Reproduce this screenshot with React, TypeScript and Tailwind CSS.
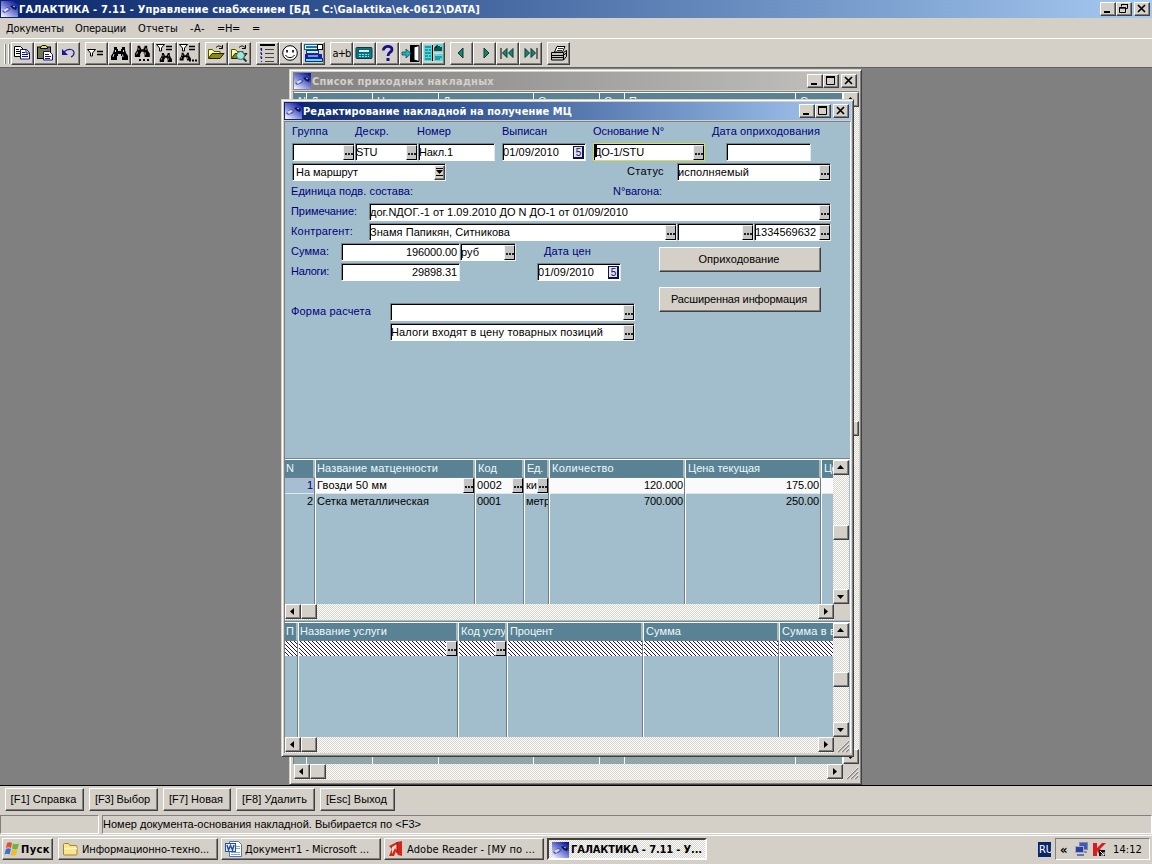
import { useLayoutEffect, useRef } from "react";
import type { ReactNode } from "react";
import clsx from "clsx";

const ui = "font-['DejaVu_Sans_Condensed','DejaVu_Sans',sans-serif]";
const raised =
  "border border-t-white border-l-white border-r-[#404040] border-b-[#404040] bg-[#d4d0c8] shadow-[inset_-1px_-1px_0_#808080]";
const track =
  "bg-[repeating-conic-gradient(#ffffff_0_25%,#d8d4cc_0_50%)] bg-[length:2px_2px]";

// Spreads the letters so that a label takes the given width
const Fit = ({
  w,
  children,
  className,
}: {
  w: number;
  children: string;
  className?: string;
}) => {
  const ref = useRef<HTMLSpanElement>(null);
  useLayoutEffect(() => {
    const el = ref.current;
    if (!el) return;
    el.style.letterSpacing = "0px";
    const natural = el.getBoundingClientRect().width;
    el.style.letterSpacing = `${(w - natural) / children.length}px`;
  }, [w, children]);
  return (
    <span ref={ref} className={clsx("inline-block shrink-0 whitespace-pre", className)}>
      {children}
    </span>
  );
};

const AppIcon = () => (
  <svg width="17" height="16" viewBox="0 0 17 16" className="shrink-0">
    <defs>
      <linearGradient id="sky" x1="0" y1="1" x2="0.8" y2="0">
        <stop offset="0" stopColor="#ffffff" />
        <stop offset="0.45" stopColor="#8a92e0" />
        <stop offset="1" stopColor="#0a1a9c" />
      </linearGradient>
    </defs>
    <rect width="17" height="16" fill="url(#sky)" />
    <path d="M1 10l5-4 4 1-2 3-5 2z" fill="#5058a4" />
    <path d="M2 9l4-2 2 1-4 3z" fill="#d8dcf8" />
    <path d="M9 5l3-1 4 2-1 3-3-1z" fill="#101850" />
    <path d="M12 5l2 1" stroke="#b8c0f0" />
  </svg>
);

const CaptionButton = ({ kind }: { kind: "min" | "max" | "restore" | "close" }) => (
  <div className={clsx("h-[14px] w-4", raised)}>
    <svg width="14" height="12" viewBox="0 0 14 12" fill="none" stroke="#000">
      {kind === "min" && <path d="M3 9h6" strokeWidth="2" />}
      {kind === "max" && <path d="M2.5 2v7.5h8V2M2 2h9" strokeWidth="1" />}
      {kind === "max" && <path d="M2 2h9" strokeWidth="2" />}
      {kind === "restore" && (
        <path d="M4.5 3.5V1.5h6v4h-2M4 1.5h7M2.5 4.5h6v5h-6zM2 5.2h7" />
      )}
      {kind === "close" && <path d="M3 2l7 7M10 2l-7 7" strokeWidth="1.7" />}
    </svg>
  </div>
);

const Caption = ({
  title,
  w,
  className,
  restore,
}: {
  title: string;
  w: number;
  className: string;
  restore?: boolean;
}) => (
  <div className={clsx("flex h-[18px] items-center pr-0.5 pl-px text-[11px] leading-none font-bold", ui, className)}>
    <AppIcon />
    <Fit w={w} className="ml-px">
      {title}
    </Fit>
    <div className="ml-auto flex">
      <CaptionButton kind="min" />
      <CaptionButton kind={restore ? "restore" : "max"} />
      <div className="ml-0.5">
        <CaptionButton kind="close" />
      </div>
    </div>
  </div>
);

const Binoculars = () => (
  <>
    <path d="M4 3h3v2h1v2h3V5h1V3h3v3l1 3 2 3v4h-6v-4h-1v-2H8v2H7v4H1v-4l2-3 1-3z" fill="#000" />
    <path d="M5.500 6v2M13.500 6v2M4 10l-1 3M12.500 10.500l.5 2.500" stroke="#fff" strokeWidth=".8" />
  </>
);

const Funnel = () => (
  <>
    <path d="M.5.5h8l-3 3.5v3h-2V4z" fill="#fff" stroke="#000" />
    <path d="M10 2.5h6M10 5.5h6" stroke="#000" strokeWidth="1.6" />
  </>
);

const Folder = () => (
  <>
    <path d="M1.500 14V5.500h4l1.500 2h6V9" fill="#ffff9a" stroke="#55550a" />
    <path d="M1.500 14.500L5 9.500h12l-4 5z" fill="#8a8a12" stroke="#222200" />
    <path d="M9 3.500c2-2 4-2 6 0M15.500 1v3.500H12" fill="none" stroke="#000" />
  </>
);

const icons: Record<string, ReactNode> = {
  copy: (
    <>
      <path d="M1.5 2.500h6l3 3v7h-9z" fill="#fff" stroke="#000" />
      <path d="M3 5.500h3M3 7.500h5M3 9.500h4" stroke="#000" />
      <path d="M7.500 5.500h6l3 3v6.500h-9z" fill="#fff" stroke="#101080" />
      <path d="M13 5.500v3.500h3M9 8.500h3M9 10.500h6M9 12.500h6" fill="none" stroke="#101080" />
    </>
  ),
  paste: (
    <>
      <rect x="1.500" y="3" width="13" height="11.500" fill="#77774a" stroke="#000" />
      <path d="M4.500 4.500V3l2-1.500h3l2 1.500v1.500z" fill="#e4e060" stroke="#000" />
      <path d="M7.500 7.500h6l3 3V16h-9z" fill="#fff" stroke="#101080" />
      <path d="M9 10.500h4M9 12.500h6M9 14.500h5" stroke="#101080" />
    </>
  ),
  undo: (
    <>
      <path d="M5 8c4-4 10-3 10 1 0 2-1 3-3 4" fill="none" stroke="#1515a0" strokeWidth="1.200" />
      <path d="M3 5v6h6z" fill="#1515a0" />
    </>
  ),
  filter: (
    <g transform="translate(0 5)">
      <Funnel />
    </g>
  ),
  find: <Binoculars />,
  findNext: (
    <>
      <g transform="translate(1 -1) scale(.88)">
        <Binoculars />
      </g>
      <path d="M6 16h2M10 16h2M14 16h2" stroke="#000" strokeWidth="2" />
    </>
  ),
  filterFind: (
    <>
      <Funnel />
      <g transform="translate(3 7) scale(.72 .68)">
        <Binoculars />
      </g>
    </>
  ),
  filterNext: (
    <>
      <Funnel />
      <g transform="translate(0 7) scale(.66 .6)">
        <Binoculars />
      </g>
      <path d="M10 16.500h2M13 16.500h2M16 16.500h2" stroke="#000" strokeWidth="2" />
    </>
  ),
  open: <Folder />,
  preview: (
    <>
      <Folder />
      <circle cx="10.500" cy="11.500" r="4" fill="#a4e4dc" stroke="#207070" />
      <path d="M13.500 14.500l3 3" stroke="#104040" strokeWidth="2" />
    </>
  ),
  list: (
    <>
      <path d="M2 1h15" stroke="#000" strokeWidth="2" />
      <path d="M7 5.500h9M7 9.500h9M7 13.500h9M7 17.500h9" stroke="#333" strokeWidth=".9" />
      <path d="M3.500 4v3M3.500 9v2M3.500 13v2M3.500 17v1M2 5h2M2 9h2M2 13h2" stroke="#1414a0" strokeWidth="1.200" />
    </>
  ),
  smile: (
    <>
      <circle cx="9" cy="9" r="7.300" fill="#fff" stroke="#000" />
      <path d="M6 6v2.500M12 6v2.500" stroke="#000" strokeWidth="1.600" />
      <path d="M4.500 11c2 3.500 7 3.500 9 0" fill="none" stroke="#000" />
    </>
  ),
  form: (
    <>
      <rect x=".5" y=".5" width="18" height="5" fill="#d8f6ff" stroke="#126484" />
      <path d="M2 3h11" stroke="#2070b0" strokeWidth="2" />
      <rect x="13.500" y=".5" width="5" height="5" fill="#fff" stroke="#000" />
      <rect x="2.500" y="6.500" width="12" height="3" fill="#c4f2ff" stroke="#1030a0" />
      <rect x="1" y="10" width="17" height="4" fill="#1020a8" />
      <path d="M4 12h10" stroke="#fff" />
      <rect x="1.500" y="14.500" width="17" height="3" fill="#60d8e8" stroke="#103080" />
    </>
  ),
  calc: (
    <>
      <rect x="1" y="3.500" width="16" height="11" rx="1" fill="#087888" stroke="#043848" />
      <rect x="3.500" y="5.500" width="11" height="3" fill="#d0f4e8" stroke="#043848" strokeWidth=".7" />
      <path d="M4 10.500h10M4 12.500h10" stroke="#80e0e8" strokeDasharray="2 1" />
    </>
  ),
  help: (
    <>
      <path d="M5.500 6.500C5 1.500 14 1 14 5.500 14 8.500 10 8 10 12" fill="none" stroke="#10108c" strokeWidth="2.800" />
      <rect x="8.500" y="14" width="3" height="3" fill="#10108c" />
    </>
  ),
  exit: (
    <>
      <path d="M9 1h9v17H9z" fill="#000" />
      <path d="M13 3l5-1.500v16L13 16z" fill="#fff" stroke="#000" />
      <path d="M1 8h4V5l5 4.500L5 14v-3H1z" fill="#20b0b8" stroke="#045060" strokeWidth=".8" />
    </>
  ),
  views: (
    <>
      <path d="M0 1h8v16H0zM10 0h9v8h-9zM10 10h9v7h-9z" fill="#50dce0" />
      <path d="M1 3h6M1 6h3M5 6h2M1 9h6M1 12h3M5 12h2M1 15h6M11 13h7M11 15h5" stroke="#045860" />
      <path d="M11 7V4l2-2v5M15 2v5M17 3v4" fill="none" stroke="#000" strokeWidth="1.300" />
      <path d="M8.500 1v16" stroke="#000" />
    </>
  ),
  prev: <path d="M11 4v10L6 9z" fill="#1f8070" stroke="#043c34" />,
  next: <path d="M9 4v10l5-5z" fill="#1f8070" stroke="#043c34" />,
  first: (
    <>
      <path d="M3 4v11" stroke="#000" />
      <path d="M9 4.500v9L4.500 9zM15 4.500v9L10.500 9z" fill="#1f8070" stroke="#043c34" />
    </>
  ),
  last: (
    <>
      <path d="M16 4v11" stroke="#000" />
      <path d="M4 4.500v9L8.500 9zM10 4.500v9l4.500-4.500z" fill="#1f8070" stroke="#043c34" />
    </>
  ),
  print: (
    <>
      <path d="M5.500 8L8 2.500h8L13.500 8z" fill="#fff" stroke="#000" />
      <path d="M9 4.500h5M8 6.500h5" stroke="#000" strokeWidth=".8" />
      <path d="M2.500 8.500h12l3-2v6l-3 3.500h-12z" fill="#c8c4bc" stroke="#000" />
      <path d="M3 11.500h11.500M3 13.500h11.500M14.500 9v7M14.500 11l3-2" stroke="#000" />
    </>
  ),
};

const toolGroups = [
  ["copy", "paste", "undo"],
  ["filter", "find", "findNext", "filterFind", "filterNext"],
  ["open", "preview"],
  ["list", "smile", "form"],
  ["text", "calc", "help", "exit", "views"],
  ["prev", "next", "first", "last"],
  ["print"],
];

const Toolbar = () => (
  <div className="flex h-[29px] items-start gap-[5px] border-t border-white pt-[3px] pl-1">
    <div className="-mr-1 flex gap-0.5 pt-0.5">
      <div className="h-5 w-0.5 border-r border-l border-r-[#808080] border-l-white" />
      <div className="h-5 w-0.5 border-r border-l border-r-[#808080] border-l-white" />
    </div>
    {toolGroups.map((group) => (
      <div key={group[0]} className="flex">
        {group.map((name) => (
          <div key={name} className={clsx("flex h-[23px] w-[23px] items-center justify-center", raised)}>
            {name === "text" ? (
              <Fit w={18} className={clsx("text-[11px] leading-none", ui)}>
                a+b
              </Fit>
            ) : (
              <svg width="19" height="19" viewBox="0 0 19 19" className="shrink-0">
                {icons[name]}
              </svg>
            )}
          </div>
        ))}
      </div>
    ))}
  </div>
);

const Dots = () => (
  <div className="flex h-[15px] w-[11px] shrink-0 items-end justify-center gap-px border border-t-[#f4f4f4] border-l-[#f4f4f4] border-r-black border-b-black bg-[#c4c4c4] pb-1">
    <i className="h-0.5 w-0.5 bg-[#202020]" />
    <i className="h-0.5 w-0.5 bg-[#202020]" />
    <i className="h-0.5 w-0.5 bg-[#202020]" />
  </div>
);

const Calendar = () => (
  <div className="mr-px flex h-[13px] w-[11px] shrink-0 items-center justify-center border border-[#10104c] bg-[#dfe3f0] text-[10px] leading-none text-[#10104c] shadow-[inset_-1px_-1px_0_#10104c]">
    5
  </div>
);

const Field = ({
  className,
  text,
  w = 0,
  end,
  right,
  focused,
}: {
  className: string;
  text?: string;
  w?: number;
  end?: ReactNode;
  right?: boolean;
  focused?: boolean;
}) => (
  <div
    className={clsx(
      "h-[18px] shrink-0 border",
      focused ? "border-[#d4e04c]" : "border-t-[#76868e] border-l-[#76868e] border-r-[#dfe9ee] border-b-white",
      className,
    )}
  >
    <div className={clsx("flex h-4 items-center border-t border-l border-black bg-white text-black", right && "justify-end pr-0.5")}>
      {focused && <span className="-mr-0.5 h-3 w-0.5 self-start bg-black" />}
      {text && (
        <Fit w={w} className={right ? "" : "-ml-px"}>
          {text}
        </Fit>
      )}
      {end && <div className="ml-auto flex items-center">{end}</div>}
    </div>
  </div>
);

const arrows = {
  left: "M8 3v7L4 6.500z",
  right: "M5 3v7l4-3.500z",
  up: "M3 8h7L6.500 4z",
  down: "M3 5h7L6.500 9z",
};

const ScrollButton = ({ dir }: { dir?: keyof typeof arrows }) => (
  <div className={clsx("h-[15px] w-4 shrink-0", raised)}>
    {dir && (
      <svg width="13" height="13" viewBox="0 0 13 13">
        <path d={arrows[dir]} fill="#000" />
      </svg>
    )}
  </div>
);

const HScroll = () => (
  <div className={clsx("flex h-4 flex-1 items-start", track)}>
    <ScrollButton dir="left" />
    <ScrollButton />
    <div className="ml-auto">
      <ScrollButton dir="right" />
    </div>
  </div>
);

const VScroll = ({ thumb }: { thumb: string }) => (
  <div className={clsx("flex w-4 shrink-0 flex-col", track)}>
    <ScrollButton dir="up" />
    <div className={thumb}>
      <ScrollButton />
    </div>
    <div className="mt-auto">
      <ScrollButton dir="down" />
    </div>
  </div>
);

const Grip = () => (
  <svg width="16" height="16" viewBox="0 0 16 16" className="shrink-0 bg-[#d4d0c8]">
    <path d="M4 15L15 4M8 15l7-7M12 15l3-3" stroke="#808080" strokeWidth="1.400" />
    <path d="M3 15L15 3M7 15l8-8M11 15l4-4" stroke="#fff" strokeWidth=".7" />
  </svg>
);

type Column = {
  title: string;
  tw: number;
  width: string;
  cells?: [string, number][];
  right?: boolean;
  dots?: boolean;
};

const goods: Column[] = [
  { title: "N", tw: 8, width: "w-[31px]", cells: [["1", 6], ["2", 6]], right: true },
  {
    title: "Название матценности",
    tw: 121,
    width: "w-[160px]",
    cells: [["Гвозди 50 мм", 70], ["Сетка металлическая", 112]],
    dots: true,
  },
  { title: "Код", tw: 19, width: "w-[49px]", cells: [["0002", 25], ["0001", 24]], dots: true },
  { title: "Ед.", tw: 16, width: "w-[25px]", cells: [["ки", 11], ["метр", 24]], dots: true },
  { title: "Количество", tw: 62, width: "w-[136px]", cells: [["120.000", 39], ["700.000", 39]], right: true },
  { title: "Цена текущая", tw: 72, width: "w-[136px]", cells: [["175.00", 33], ["250.00", 33]], right: true },
  { title: "Це", tw: 13, width: "w-[11px]", cells: [["", 0], ["", 0]] },
];

const services: Column[] = [
  { title: "П", tw: 8, width: "w-[14px]" },
  { title: "Название услуги", tw: 87, width: "w-[160px]", dots: true },
  { title: "Код услу", tw: 45, width: "w-[49px]", dots: true },
  { title: "Процент", tw: 43, width: "w-[136px]" },
  { title: "Сумма", tw: 35, width: "w-[136px]" },
  { title: "Сумма в в", tw: 54, width: "w-[53px]" },
];

const Grid = ({ columns, body, thumb, grip }: { columns: Column[]; body: string; thumb: string; grip?: boolean }) => (
  <div className="border-t border-t-[#76868e]">
    <div className="flex border-t border-white">
      <div className={clsx("flex w-[548px] shrink-0 overflow-hidden", body)}>
        {columns.map((col, i) => {
          const last = i === columns.length - 1;
          return (
            <div
              key={col.title}
              className={clsx(
                "flex shrink-0 flex-col overflow-hidden",
                col.width,
                !last && "border-r border-white",
              )}
            >
              <div
                className={clsx(
                  "flex h-[18px] items-center overflow-hidden border-b border-b-[#6f8088] bg-[#598394] text-[#f0f8fc]",
                  i < 2 ? "pl-px" : "pl-0.5",
                  !last && "border-r-2 border-r-[#aab8c0]",
                )}
              >
                <Fit w={col.tw}>{col.title}</Fit>
              </div>
              <div className={clsx("flex flex-1 flex-col", !last && "border-r border-[#6f7e86]")}>
                {col.cells ? (
                  <>
                    <div
                      className={clsx(
                        "flex h-4 items-center overflow-hidden border-b border-[#dfe8ec] pl-px",
                        i === 0 ? "bg-[#a7bed2] text-[#000080]" : "bg-[#fafafa]",
                        col.right && "justify-end pr-px",
                      )}
                    >
                      <Fit w={col.cells[0][1]}>{col.cells[0][0]}</Fit>
                      {col.dots && (
                        <div className="ml-auto">
                          <Dots />
                        </div>
                      )}
                    </div>
                    <div className={clsx("flex h-[15px] items-center overflow-hidden pl-px", col.right && "justify-end pr-px")}>
                      <Fit w={col.cells[1][1]}>{col.cells[1][0]}</Fit>
                    </div>
                  </>
                ) : (
                  <div className="flex h-[15px] justify-end bg-[repeating-linear-gradient(45deg,#1c0f78_0_0.700px,#ffffff_0.700px_2.828px)]">
                    {col.dots && <Dots />}
                  </div>
                )}
              </div>
            </div>
          );
        })}
      </div>
      <VScroll thumb={thumb} />
    </div>
    <div className="flex">
      <HScroll />
      {grip ? <Grip /> : <div className="h-4 w-4 bg-[#d4d0c8]" />}
    </div>
  </div>
);

const InvoiceForm = () => (
  <div className="flex h-[336px] flex-col bg-[#a2bdcb] pl-1.5 text-[#000080]">
    <div className="flex h-5 items-center pb-0.5">
      <Fit w={36} className="ml-px">Группа</Fit>
      <Fit w={34} className="ml-[27px]">Дескр.</Fit>
      <Fit w={34} className="ml-[28px]">Номер</Fit>
      <Fit w={45} className="ml-[51px]">Выписан</Fit>
      <Fit w={71} className="ml-[46px]">Основание N°</Fit>
      <Fit w={108} className="ml-12">Дата оприходования</Fit>
    </div>
    <div className="flex h-5 items-center pl-px">
      <Field className="w-[63px]" end={<Dots />} />
      <Field className="w-[63px]" text="STU" w={21} end={<Dots />} />
      <Field className="w-[77px]" text="Накл.1" w={34} />
      <Field className="ml-[7px] w-[84px]" text="01/09/2010" w={56} end={<Calendar />} />
      <Field className="ml-[7px] w-[112px]" text="ДО-1/STU" w={50} end={<Dots />} focused />
      <Field className="ml-[21px] w-[85px]" />
    </div>
    <div className="flex h-5 items-center pl-px">
      <Field
        className="w-[154px]"
        text=" На маршрут"
        w={65}
        end={
          <div className={clsx("h-[15px] w-[11px]", raised)}>
            <svg width="9" height="12" viewBox="0 0 9 12">
              <path d="M1 2.500h7M1 9.500h7" stroke="#000" />
              <path d="M1 4h7L4.500 8z" fill="#000" />
            </svg>
          </div>
        }
      />
      <Fit w={37} className="ml-[181px] pb-0.5 text-black">Статус</Fit>
      <Field className="ml-[13px] w-[154px]" text="исполняемый" w={71} end={<Dots />} />
    </div>
    <div className="flex h-5 items-center pb-0.5">
      <Fit w={122}>Единица подв. состава:</Fit>
      <Fit w={49} className="ml-[200px]">N°вагона:</Fit>
    </div>
    <div className="flex h-5 items-center">
      <div className="w-[78px] pb-0.5">
        <Fit w={66}>Примечание:</Fit>
      </div>
      <Field className="w-[462px]" text="дог.NДОГ.-1 от 1.09.2010 ДО N ДО-1 от 01/09/2010" w={258} end={<Dots />} />
    </div>
    <div className="flex h-5 items-center">
      <div className="w-[78px] pb-0.5">
        <Fit w={62}>Контрагент:</Fit>
      </div>
      <Field className="w-[308px]" text="Знамя Папикян, Ситникова" w={140} end={<Dots />} />
      <Field className="w-[77px]" end={<Dots />} />
      <Field className="w-[77px]" text="1334569632" w={61} end={<Dots />} />
    </div>
    <div className="flex">
      <div className="flex w-[368px] flex-col">
        <div className="flex h-5 items-center">
          <div className="w-[50px] pb-0.5">
            <Fit w={38}>Сумма:</Fit>
          </div>
          <Field className="w-[119px]" text="196000.00" w={51} right />
          <Field className="w-[56px]" text="руб" w={18} end={<Dots />} />
          <Fit w={47} className="ml-[28px] pb-0.5">Дата цен</Fit>
        </div>
        <div className="flex h-5 items-center">
          <div className="w-[50px] pb-0.5">
            <Fit w={38}>Налоги:</Fit>
          </div>
          <Field className="w-[119px]" text="29898.31" w={45} right />
          <Field className="ml-[77px] w-[84px]" text="01/09/2010" w={56} end={<Calendar />} />
        </div>
        <div className="mt-5 flex h-5 items-center">
          <div className="w-[99px] pb-0.5">
            <Fit w={80}>Форма расчета</Fit>
          </div>
          <Field className="w-[245px]" end={<Dots />} />
        </div>
        <div className="flex h-5 items-center pl-[99px]">
          <Field className="w-[245px]" text="Налоги входят в цену товарных позиций" w={212} end={<Dots />} />
        </div>
      </div>
      <div className="flex flex-col gap-[15px] pt-[5px] text-black">
        <div className={clsx("flex h-[25px] w-[162px] items-center justify-center pr-0.5", raised)}>
          <Fit w={81}>Оприходование</Fit>
        </div>
        <div className={clsx("flex h-[25px] w-[162px] items-center justify-center pr-0.5", raised)}>
          <Fit w={136}>Расширенная информация</Fit>
        </div>
      </div>
    </div>
  </div>
);

const windowFrame =
  "absolute border border-t-[#d4d0c8] border-l-[#d4d0c8] border-r-[#404040] border-b-[#404040] bg-[#d4d0c8] p-0.5 shadow-[inset_1px_1px_0_#fff,inset_-1px_-1px_0_#808080]";

const listColumns = ["w-[13px]", "w-[66px]", "w-[66px]", "w-[95px]", "w-[66px]", "w-[25px]", "w-[171px]", "w-[47px]"];
const listTitles = ["N", "Дескр.", "Номер", "Дата", "Основание", "С", "Поставщик", "Сумма"];

const ListWindow = () => (
  <div className={clsx(windowFrame, "top-[1px] left-[289px] h-[716px] w-[573px]")}>
    <Caption
      title="Список приходных накладных"
      w={182}
      className="ml-px bg-linear-to-r from-[#808080] to-[#c4c2be] text-[#d4d0c8]"
    />
    <div className="mt-px ml-px flex h-[673px] border-t border-l border-[#808080]">
      <div className="flex w-[549px]">
        {listColumns.map((width, i) => (
          <div key={i} className={clsx("shrink-0 border-r border-white bg-[#91a6a6]", width)}>
            <div className="h-[19px] overflow-hidden border-t border-white bg-[#598394] pt-[3px] pl-1 text-[#f0f8fc]">
              {listTitles[i]}
            </div>
          </div>
        ))}
      </div>
      <VScroll thumb="mt-[314px]" />
    </div>
    <div className="ml-0.5 flex">
      <HScroll />
      <Grip />
    </div>
  </div>
);

const InvoiceWindow = () => (
  <div className={clsx(windowFrame, "top-[31px] left-[281px] h-[658px] w-[573px]")}>
    <Caption
      title="Редактирование накладной на получение МЦ"
      w={269}
      className="bg-linear-to-r from-[#0a246a] to-[#a6caf0] text-white"
    />
    <div className="mt-px border-t border-r border-l border-t-[#808080] border-r-white border-l-[#808080] bg-[#a2bdcb]">
      <InvoiceForm />
      <div className="pb-px">
        <Grid columns={goods} body="h-[144px]" thumb="mt-[50px]" />
      </div>
      <Grid columns={services} body="h-[114px]" thumb="mt-[34px]" grip />
    </div>
  </div>
);

const menu: [string, number, string][] = [
  ["Документы", 58, ""],
  ["Операции", 51, "ml-[11px]"],
  ["Отчеты", 40, "ml-[12px]"],
  ["-А-", 15, "ml-[12px]"],
  ["=Н=", 23, "ml-[12px]"],
  ["=", 7, "ml-[12px]"],
];

const keys: [string, number, string][] = [
  ["[F1] Справка", 66, "w-[79px]"],
  ["[F3] Выбор", 55, "w-[69px]"],
  ["[F7] Новая", 54, "w-[68px]"],
  ["[F8] Удалить", 65, "w-[79px]"],
  ["[Esc] Выход", 61, "w-[75px]"],
];

const Task = ({ icon, text, w }: { icon: ReactNode; text: string; w: number }) => (
  <div className={clsx("flex h-[22px] w-40 items-center gap-[3px] pl-[3px]", raised)}>
    {icon}
    <Fit w={w}>{text}</Fit>
  </div>
);

const Taskbar = () => (
  <div className={clsx("flex h-[29px] items-start gap-[3px] border-t border-white pt-0.5 pl-0.5 text-[11px] leading-none", ui)}>
    <div className={clsx("mr-0.5 flex h-[22px] w-[51px] items-center gap-px pl-px font-bold", raised)}>
      <svg width="16" height="16" viewBox="0 0 16 16" className="shrink-0">
        <path d="M3 2q2.500-1.500 5 0L7 7Q4.500 5.500 2 7z" fill="#e0502c" />
        <path d="M9 2.500q2.500 1.500 6 0L13.500 8Q11 9 8 7.500z" fill="#6cb43c" />
        <path d="M2 8q2.500-1.500 5 0l-1.500 5.500Q3 12 .5 13.500z" fill="#3c6ce0" />
        <path d="M8 8.500q2.500 1.500 5.500 0L12 14q-3 1-5.500 0z" fill="#f0bc28" />
      </svg>
      <Fit w={29}>Пуск</Fit>
    </div>
    <Task
      text="Информационно-техно..."
      w={127}
      icon={
        <svg width="17" height="16" viewBox="0 0 17 16" className="shrink-0">
          <path d="M1.500 13V3.500q0-1 1-1h4l1.500 2h6q1 0 1 1V13q0 1-1 1h-11.500q-1 0-1-1z" fill="#fbe48c" stroke="#a8841c" />
          <path d="M2 7.500h13" stroke="#fff7cc" strokeWidth="1.500" />
        </svg>
      }
    />
    <Task
      text="Документ1 - Microsoft ..."
      w={124}
      icon={
        <svg width="17" height="16" viewBox="0 0 17 16" className="shrink-0">
          <path d="M4.500.5h9l3 3v12h-12z" fill="#fff" stroke="#5474b0" />
          <path d="M11 5.500h4M11 7.500h4M6 11.500h9M6 13.500h9" stroke="#88a4d8" />
          <rect x=".5" y="2.500" width="10" height="8" fill="#e8f0ff" stroke="#2450a8" />
          <path d="M2 4l1.500 5 2-4.500 2 4.500L9 4" fill="none" stroke="#1c48a8" strokeWidth="1.400" />
        </svg>
      }
    />
    <Task
      text="Adobe Reader - [МУ по ..."
      w={128}
      icon={
        <svg width="16" height="16" viewBox="0 0 16 16" className="shrink-0">
          <path d="M1 5l8-4 5-1v15l-4-1-2-4-2 5-5 0 3-7z" fill="#d82418" />
          <path d="M4 6l5-3v7l-2-3-3 6z" fill="#f8d8d0" />
          <path d="M9 1v11" stroke="#901008" />
        </svg>
      }
    />
    <div className={clsx("flex h-[22px] w-40 items-center gap-0.5 border-2 border-t-[#404040] border-l-[#404040] border-r-white border-b-white pt-px pl-[3px] font-bold", track)}>
      <AppIcon />
      <Fit w={131}>ГАЛАКТИКА - 7.11 - У...</Fit>
    </div>
    <div className="ml-auto flex items-center">
      <div className="mr-1 flex h-[15px] w-[13px] items-center overflow-hidden bg-[#0a246a] pl-px text-[11px] text-white">
        <Fit w={14}>RU</Fit>
      </div>
      <div className="mr-0.5 flex h-[22px] w-[95px] items-center border border-t-[#808080] border-l-[#808080] border-r-white border-b-white pl-1">
        <span className="w-[14px] text-[13px] font-bold">«</span>
        <svg width="15" height="16" viewBox="0 0 15 16">
          <rect x="5.500" y="1.500" width="8" height="7" fill="#4058b8" stroke="#8088a8" />
          <path d="M8 10h5v2H8z" fill="#8890a8" />
          <rect x="1.500" y="5.500" width="8" height="6" fill="#2c40a0" stroke="#a0a8cc" />
          <path d="M3 14h7" stroke="#6c7498" strokeWidth="2" />
        </svg>
        <svg width="15" height="15" viewBox="0 0 15 15" className="ml-[3px]">
          <path d="M1 1h4v5l5-5h4L8 7l5 6H8L5 9v5H1z" fill="#d81c20" />
          <path d="M7 8h6v6H7z" fill="#111" />
          <path d="M8 9l4 4M12 10v3H9" stroke="#fff" fill="none" />
        </svg>
        <Fit w={29} className="ml-[6px]">
          14:12
        </Fit>
      </div>
    </div>
  </div>
);

export default function App() {
  return (
    <div className="flex h-[864px] w-[1152px] flex-col overflow-hidden bg-[#d4d0c8] font-['Liberation_Sans',Arial,sans-serif] text-[11px] leading-none text-black">
      <Caption
        title="ГАЛАКТИКА - 7.11 - Управление снабжением [БД - C:\Galaktika\ek-0612\DATA]"
        w={461}
        restore
        className="bg-linear-to-r from-[#0a246a] to-[#a6caf0] text-white"
      />
      <div className={clsx("flex h-5 items-center pl-1.5 text-[11px]", ui)}>
        {menu.map(([label, w, gap]) => (
          <Fit key={label} w={w} className={gap}>
            {label}
          </Fit>
        ))}
      </div>
      <Toolbar />
      <div className="relative h-[718px] overflow-hidden border-t border-[#606060] bg-[#808080]">
        <ListWindow />
        <InvoiceWindow />
      </div>
      <div className="flex h-[30px] items-start gap-[5px] border-t border-black pt-0.5 pl-[5px]">
        {keys.map(([label, w, width]) => (
          <div key={label} className={clsx("flex h-[23px] items-center justify-center pr-0.5", width, raised)}>
            <Fit w={w}>{label}</Fit>
          </div>
        ))}
      </div>
      <div className="flex h-5 gap-[3px]">
        <div className="h-[19px] w-[99px] border border-t-[#808080] border-l-[#808080] border-r-white border-b-white" />
        <div className="flex h-[19px] flex-1 items-center border border-t-[#808080] border-l-[#808080] border-r-white border-b-white">
          <Fit w={318}>{"Номер документа-основания накладной. Выбирается по <F3>"}</Fit>
        </div>
      </div>
      <Taskbar />
    </div>
  );
}
